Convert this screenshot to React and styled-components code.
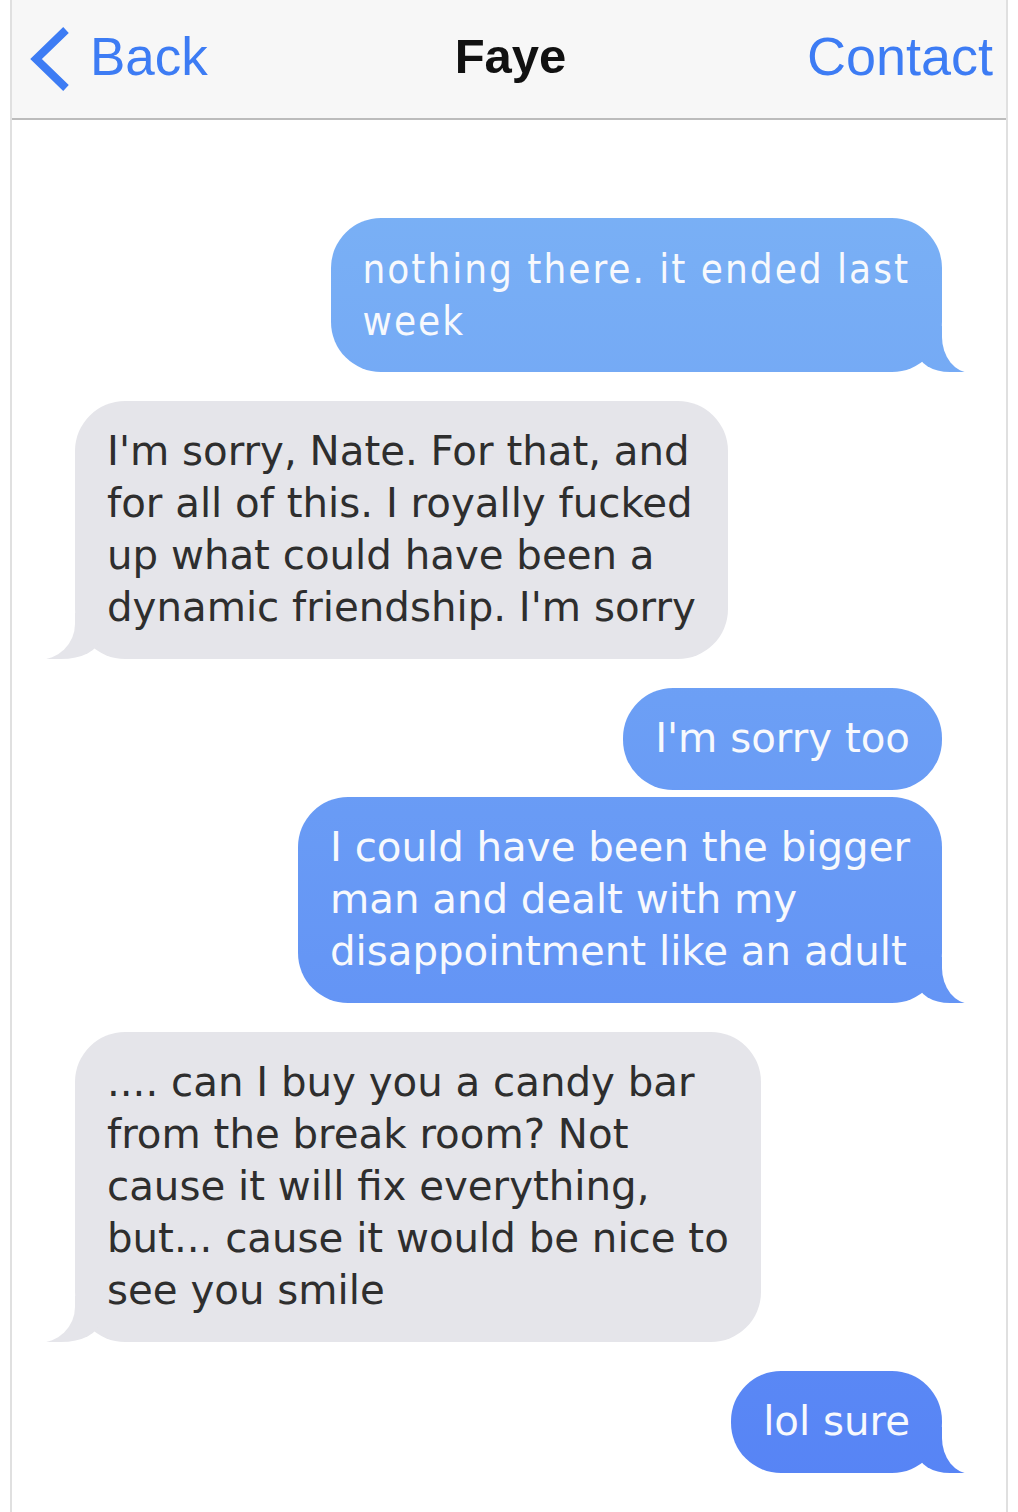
import React from "react";
import styled, { createGlobalStyle, css } from "styled-components";

const GlobalStyle = createGlobalStyle`
  html, body {
    margin: 0;
    padding: 0;
    background: #ffffff;
  }
  body {
    font-family: "DejaVu Sans", Verdana, sans-serif;
  }
`;

const SENT_BG = "linear-gradient(to bottom, #7fb7f5 0%, #5683f5 100%) fixed";
const RECEIVED_BG = "#e5e5ea";

const messages = [
  { from: "me", text: "nothing there. it ended last\nweek", tail: true, narrow: true },
  {
    from: "them",
    text: "I'm sorry, Nate. For that, and\nfor all of this. I royally fucked\nup what could have been a\ndynamic friendship. I'm sorry",
    tail: true,
  },
  { from: "me", text: "I'm sorry too", tail: false },
  {
    from: "me",
    text: "I could have been the bigger\nman and dealt with my\ndisappointment like an adult",
    tail: true,
    tight: true,
  },
  {
    from: "them",
    text: ".... can I buy you a candy bar\nfrom the break room? Not\ncause it will fix everything,\nbut... cause it would be nice to\nsee you smile",
    tail: true,
  },
  { from: "me", text: "lol sure", tail: true },
];

const App = () => (
  <>
    <GlobalStyle />
    <Phone>
      <NavBar>
        <BackLink>
          <svg width="44" height="66" viewBox="0 0 44 66">
            <polyline
              points="38,4 8,33 38,62"
              fill="none"
              stroke="#3d7cf4"
              strokeWidth="8"
              strokeLinejoin="miter"
            />
          </svg>
          <span>Back</span>
        </BackLink>
        <Title>Faye</Title>
        <ContactLink>Contact</ContactLink>
      </NavBar>
      <Thread>
        {messages.map((m, i) => (
          <Row key={i} $mine={m.from === "me"} $tight={m.tight}>
            <Bubble $mine={m.from === "me"} $tail={m.tail} $narrow={m.narrow}>
              {m.text}
            </Bubble>
          </Row>
        ))}
      </Thread>
    </Phone>
  </>
);

export default App;

const Phone = styled.div`
  margin-left: 10px;
  width: 994px;
  min-height: 1512px;
  border-left: 2px solid #e0e0e0;
  border-right: 2px solid #e0e0e0;
  background: #ffffff;
`;

const NavBar = styled.header`
  display: grid;
  grid-template-columns: 1fr auto 1fr;
  align-items: center;
  height: 120px;
  padding: 0 13px 6px 16px;
  box-sizing: border-box;
  background: #f7f7f7;
  border-bottom: 2px solid #bcbcbc;
  font-family: "Liberation Sans", Arial, sans-serif;
`;

const BackLink = styled.div`
  display: flex;
  align-items: center;
  gap: 18px;
  color: #3d7cf4;
  font-size: 53px;
  line-height: 1;

  svg {
    display: block;
    margin-top: 6px;
  }
`;

const Title = styled.div`
  font-size: 49px;
  font-weight: bold;
  color: #111111;
  line-height: 1;
`;

const ContactLink = styled.div`
  justify-self: end;
  font-size: 54px;
  color: #3d7cf4;
  line-height: 1;
`;

const Thread = styled.main`
  display: flex;
  flex-direction: column;
  padding: 98px 64px 40px 63px;
`;

const Row = styled.div`
  display: flex;
  justify-content: ${(p) => (p.$mine ? "flex-end" : "flex-start")};
  margin-top: ${(p) => (p.$tight ? "7px" : "29px")};

  &:first-child {
    margin-top: 0;
  }
`;

const sentTail = css`
  &::before {
    content: "";
    position: absolute;
    right: -30px;
    bottom: 0;
    width: 54px;
    height: 46px;
    background: ${SENT_BG};
    border-bottom-left-radius: 32px 20px;
  }
  &::after {
    content: "";
    position: absolute;
    right: -40px;
    bottom: -1px;
    width: 40px;
    height: 48px;
    background: #ffffff;
    border-bottom-left-radius: 29px 36px;
  }
`;

const receivedTail = css`
  &::before {
    content: "";
    position: absolute;
    left: -38px;
    bottom: 0;
    width: 62px;
    height: 46px;
    background: ${RECEIVED_BG};
    border-bottom-right-radius: 38px 20px;
  }
  &::after {
    content: "";
    position: absolute;
    left: -46px;
    bottom: -1px;
    width: 46px;
    height: 48px;
    background: #ffffff;
    border-bottom-right-radius: 37px 36px;
  }
`;

const Bubble = styled.div`
  position: relative;
  white-space: pre-line;
  padding: 25px 32px 25px 32px;
  border-radius: 50px;
  font-size: 40.3px;
  line-height: 52px;
  background: ${(p) => (p.$mine ? SENT_BG : RECEIVED_BG)};
  color: ${(p) => (p.$mine ? "#f7f9fd" : "#2e2e2e")};

  ${(p) =>
    p.$narrow &&
    css`
      font-size: 40px;
      font-stretch: condensed;
      font-family: "DejaVu Sans Condensed", "DejaVu Sans", sans-serif;
      letter-spacing: 2px;
    `}

  ${(p) => p.$tail && (p.$mine ? sentTail : receivedTail)}
`;
